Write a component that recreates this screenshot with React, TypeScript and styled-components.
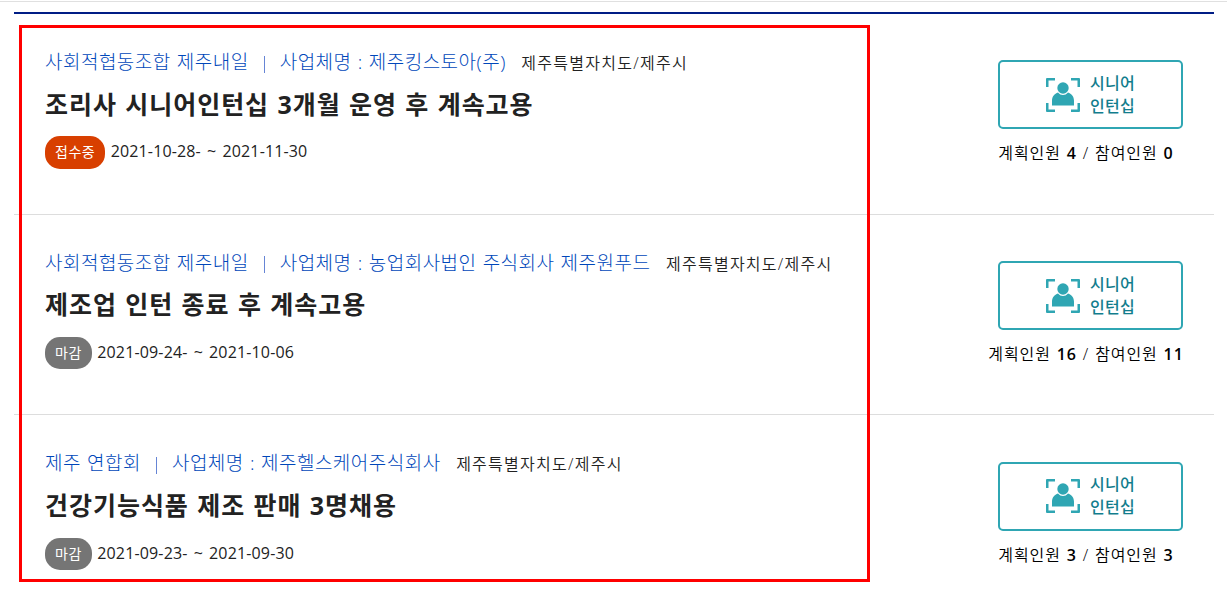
import React from 'react';
import styled, { createGlobalStyle } from 'styled-components';

const GlobalStyle = createGlobalStyle`
  body {
    margin: 0;
    background-color: #fff;
    color: #222;
    font-family: "Open Sans", "Noto Sans CJK KR", sans-serif;
    overflow: hidden;
  }
`;

const Page = styled.div`
  position: relative;
  height: 598px;
  border-top: 1px solid #e0e0e0;
  margin-top: 1px;
  padding: 10px 14px 0;
  box-sizing: border-box;
`;

const JobList = styled.ul`
  list-style: none;
  margin: 0;
  padding: 0;
  width: 1200px;
  border-top: 2px solid #001d85;
`;

const JobItem = styled.li`
  display: flex;
  justify-content: space-between;
  box-sizing: border-box;
  height: 200.6px;
  padding: 33.1px 31px 0;
  border-bottom: 1px solid #ddd;

  &:last-child {
    border-bottom: none;
  }
`;

const JobInfo = styled.div`
  display: flex;
  flex-direction: column;
`;

const CompanyLine = styled.div`
  display: flex;
  align-items: baseline;
  height: 30px;
  line-height: 30px;
  white-space: pre;
`;

const Company = styled.span`
  color: #0047ba;
  font-size: 19px;
  font-weight: 300;
  letter-spacing: 0.48px;
  word-spacing: 0.7px;
`;

const Divider = styled.span`
  display: inline-block;
  width: 1px;
  height: 17px;
  margin: 0 15px;
  background-color: #6685d5;
  vertical-align: -3.5px;
`;

const Region = styled.span`
  margin-left: 15.5px;
  font-size: 16px;
  font-weight: 350;
  letter-spacing: 1.27px;
`;

const Title = styled.h3`
  margin: 8.6px 0 0;
  height: 36px;
  line-height: 36px;
  font-size: 25px;
  font-weight: bold;
  letter-spacing: 0.97px;
  word-spacing: 0.9px;
  white-space: pre;
`;

const PeriodLine = styled.div`
  display: flex;
  align-items: flex-start;
  gap: 5.5px;
  margin-top: 14.8px;
`;

const Status = styled.span<{ $open?: boolean }>`
  height: 32.3px;
  line-height: 31px;
  padding: 0 10px;
  border-radius: 15px;
  background-color: ${({ $open }) => ($open ? '#d83f00' : '#757575')};
  color: #fff;
  font-size: 14px;
  letter-spacing: 0.5px;
`;

const Period = styled.span`
  line-height: 31px;
  font-size: 16px;
  font-weight: 400;
  letter-spacing: 0.15px;
  word-spacing: 1.8px;
  white-space: pre;
`;

const Side = styled.div`
  display: flex;
  flex-direction: column;
  align-items: center;
  width: 185px;
  padding-top: 13.35px;
`;

const TypeBox = styled.div`
  display: flex;
  align-items: center;
  justify-content: center;
  gap: 10px;
  box-sizing: border-box;
  flex: none;
  width: 185px;
  height: 69px;
  border: 2px solid #2fa6b3;
  border-radius: 5px;
  color: #127d8d;
  font-size: 16px;
  font-weight: 500;
  line-height: 23px;
  letter-spacing: 0.2px;
`;

const Count = styled.p`
  margin: 10px 0 0;
  padding-right: 9px;
  line-height: 28px;
  color: #000;
  font-size: 16px;
  font-weight: 350;
  letter-spacing: 0.9px;
  word-spacing: 0.9px;
  white-space: pre;

  strong {
    font-weight: 600;
  }
`;

// 강조 영역 표시
const Highlight = styled.div`
  position: absolute;
  left: 19px;
  top: 23px;
  width: 851px;
  height: 557px;
  box-sizing: border-box;
  border: 3px solid #f00;
  pointer-events: none;
`;

interface Job {
  org: string;
  company: string;
  region: string;
  title: string;
  open: boolean;
  period: string;
  plan: number;
  joined: number;
}

const jobs: Job[] = [
  {
    org: '사회적협동조합 제주내일',
    company: '제주킹스토아(주)',
    region: '제주특별자치도/제주시',
    title: '조리사 시니어인턴십 3개월 운영 후 계속고용',
    open: true,
    period: '2021-10-28- ~ 2021-11-30',
    plan: 4,
    joined: 0,
  },
  {
    org: '사회적협동조합 제주내일',
    company: '농업회사법인 주식회사 제주원푸드',
    region: '제주특별자치도/제주시',
    title: '제조업 인턴 종료 후 계속고용',
    open: false,
    period: '2021-09-24- ~ 2021-10-06',
    plan: 16,
    joined: 11,
  },
  {
    org: '제주 연합회',
    company: '제주헬스케어주식회사',
    region: '제주특별자치도/제주시',
    title: '건강기능식품 제조 판매 3명채용',
    open: false,
    period: '2021-09-23- ~ 2021-09-30',
    plan: 3,
    joined: 3,
  },
];

const SeniorIcon: React.FC = () => (
  <svg width="34" height="34" viewBox="0 0 34 34" fill="#2fa6b3">
    <path d="M1 0h8v2.5H2.5V9H0V1a1 1 0 0 1 1-1zM25 0h8a1 1 0 0 1 1 1v8h-2.5V2.5H25zM0 25h2.5v6.5H9V34H1a1 1 0 0 1-1-1zM31.5 25H34v8a1 1 0 0 1-1 1h-8v-2.5h6.5z" />
    <circle cx="17" cy="10" r="5.7" />
    <path d="M6 27.5v-4.7c0-4.2 2.5-7.3 6-8.3 1.4 1.7 3.2 2.500 5 2.500s3.600-.8 5-2.500c3.500 1 6 4.100 6 8.300v4.700z" />
  </svg>
);

const App: React.FC = () => {
  return (
    <>
      <GlobalStyle />
      <Page>
        <JobList>
          {jobs.map((job) => (
            <JobItem key={job.title}>
              <JobInfo>
                <CompanyLine>
                  <Company>
                    {job.org}
                    <Divider />
                    사업체명 : {job.company}
                  </Company>
                  <Region>{job.region}</Region>
                </CompanyLine>
                <Title>{job.title}</Title>
                <PeriodLine>
                  <Status $open={job.open}>{job.open ? '접수중' : '마감'}</Status>
                  <Period>{job.period}</Period>
                </PeriodLine>
              </JobInfo>
              <Side>
                <TypeBox>
                  <SeniorIcon />
                  <span>
                    시니어
                    <br />
                    인턴십
                  </span>
                </TypeBox>
                <Count>
                  계획인원 <strong>{job.plan}</strong> / 참여인원 <strong>{job.joined}</strong>
                </Count>
              </Side>
            </JobItem>
          ))}
        </JobList>
        <Highlight />
      </Page>
    </>
  );
};

export default App;
